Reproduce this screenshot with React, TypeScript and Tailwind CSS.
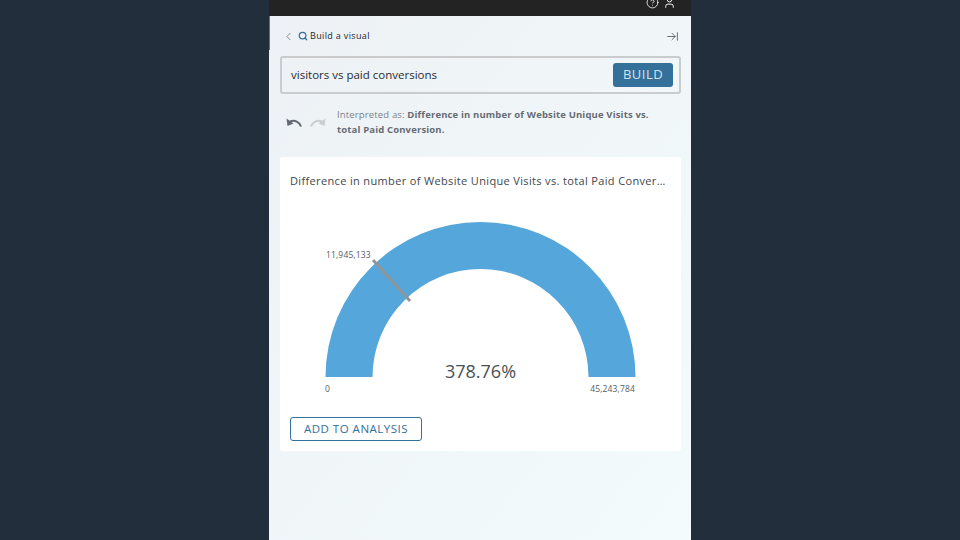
import React from 'react';
import { ChevronLeft, Search, ArrowRightToLine, CircleHelp, User } from 'lucide-react';

const FONT = 'font-["Open_Sans",sans-serif]';

function Arrow({ className, flip }: { className: string; flip?: boolean }) {
  return (
    <svg className={className} width="16" height="10" viewBox="0 0 16 10" style={flip ? { transform: 'scaleX(-1)' } : undefined}>
      <path d="M15 9.5 C13.5 5 9 2.5 4 4.5" fill="none" stroke="currentColor" strokeWidth="2" />
      <path d="M0.5 1.5 L1.5 9 L7.5 6.5 Z" fill="currentColor" />
    </svg>
  );
}

function Gauge() {
  return (
    <div className="relative h-[190px] w-full">
      <svg className="absolute left-0 top-0" width="381" height="190" viewBox="0 0 381 190">
        {/* centre of the dial is at 190.5,157 inside this box */}
        <path d="M35.5 157 A155 155 0 0 1 345.5 157 L298.5 157 A108 108 0 0 0 82.5 157 Z" fill="#55a6da" />
        <line x1="83" y1="40" x2="120" y2="81" stroke="#8f9599" strokeWidth="3" />
      </svg>
      <span className="absolute left-[36px] top-[29px] text-[8.5px] leading-[12px] tracking-[0.15px] text-[#545b64]">11,945,133</span>
      <span className="absolute left-[35px] top-[163px] text-[8.5px] leading-[12px] text-[#545b64]">0</span>
      <span className="absolute right-[36px] top-[163px] text-[8.5px] leading-[12px] tracking-[0.15px] text-[#545b64]">45,243,784</span>
      <span className="absolute left-0 top-[139px] w-full text-center text-[18px] leading-[24px] text-[#4a5059]">378.76%</span>
    </div>
  );
}

export default function App() {
  return (
    <div className={`flex h-[540px] w-[960px] justify-center overflow-hidden bg-[#222e3c] ${FONT}`}>
      <div className="relative flex w-[422px] flex-col bg-gradient-to-br from-[#edf1f5] to-[#f3fbfc]">
        <div className="absolute left-0 top-4 h-[34px] w-px bg-[#3a7ba6]" />
        <div className="flex h-4 items-end justify-end gap-1 overflow-hidden bg-[#232323] pr-[15px]">
          <CircleHelp className="mb-[7px] h-[13px] w-[13px] shrink-0 text-white" strokeWidth={1.5} />
          <User className="mb-[7px] h-[13px] w-[13px] shrink-0 text-white" strokeWidth={1.75} />
        </div>

        <div className="flex h-10 items-center pl-[14px] pr-[12px]">
          <ChevronLeft className="-ml-px h-[13px] w-[13px] text-[#6b7278]" strokeWidth={1.5} />
          <Search className="ml-[3px] h-[10px] w-[10px] text-[#33709a]" strokeWidth={3} />
          <span className="ml-[2px] text-[9px] font-medium tracking-[0.35px] text-[#23282e]">Build a visual</span>
          <ArrowRightToLine className="ml-auto h-[13px] w-[13px] text-[#4d5359]" strokeWidth={1.5} />
        </div>

        <div className="ml-[11px] mr-[10px] flex h-[38px] items-center justify-between rounded-[3px] border-2 border-[#c9cbcd] pl-[9px] pr-[6px]">
          <span className="text-[11.5px] font-medium text-[#262c33]">visitors vs paid conversions</span>
          <button className="mb-px h-6 w-[60px] rounded-[3px] bg-[#33709a] text-[13px] tracking-[0.5px] text-[#d5e2ec]">BUILD</button>
        </div>

        <div className="mt-[13px] flex items-center pl-[17px]">
          <Arrow className="text-[#626970]" />
          <Arrow className="ml-[8px] text-[#c9cdd1]" flip />
          <p className="ml-[11px] w-[320px] text-[9.5px] leading-[15px] tracking-[0.15px] text-[#7c8289]">
            Interpreted as: <b className="font-bold text-[#666c73]">Difference in number of Website Unique Visits vs. total Paid Conversion.</b>
          </p>
        </div>

        <div className="ml-[11px] mr-[10px] mt-[20px] flex h-[294px] flex-col rounded-[3px] bg-white px-[10px]">
          <h2 className="mr-[5px] mt-[16px] truncate text-[11px] leading-[16px] tracking-[0.35px] text-[#414750]">
            Difference in number of Website Unique Visits vs. total Paid Conversion
          </h2>
          <div className="mt-[31px]">
            <Gauge />
          </div>
          <button className="mt-[7px] h-6 w-[132px] shrink-0 rounded-[3px] border border-[#33709a] text-[11.5px] tracking-[0.5px] text-[#33709a]">
            ADD TO ANALYSIS
          </button>
        </div>
      </div>
    </div>
  );
}
